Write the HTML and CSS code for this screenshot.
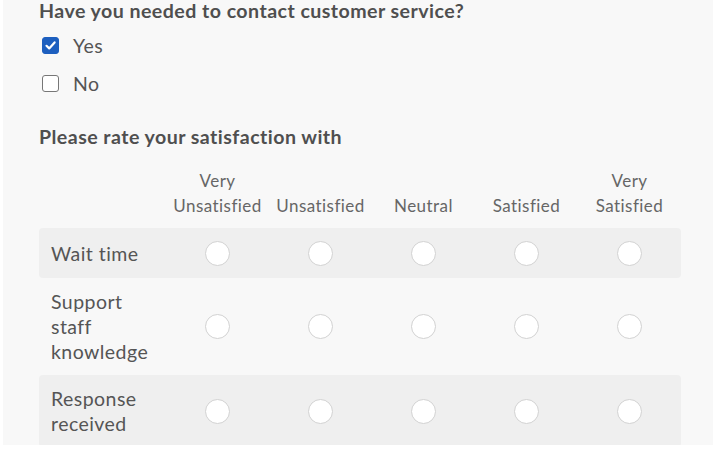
FILE: index.html
```html
<!DOCTYPE html>
<html>
<head>
   <title>Customer service survey</title>
   <link rel="stylesheet" href="styles.css">
</head>
<body>
   <div class="survey">
       <h2 class="question">Have you needed to contact customer service?</h2>
       <div class="options">
           <label class="option">
               <span class="box checked">
                   <svg width="13" height="13" viewBox="0 0 13 13"><path d="M2.5 6.8 L5.2 9.4 L10.6 3.4" fill="none" stroke="#fff" stroke-width="2.2" stroke-linecap="round" stroke-linejoin="round"/></svg>
               </span>
               Yes
           </label>
           <label class="option">
               <span class="box"></span>
               No
           </label>
       </div>

       <h2 class="question rate">Please rate your satisfaction with</h2>
       <table class="matrix">
           <thead>
               <tr>
                   <th class="label-col"></th>
                   <th>Very<br>Unsatisfied</th>
                   <th>Unsatisfied</th>
                   <th>Neutral</th>
                   <th>Satisfied</th>
                   <th>Very<br>Satisfied</th>
               </tr>
           </thead>
           <tbody>
               <tr class="shaded">
                   <td class="label-col">Wait time</td>
                   <td><input type="radio" name="wait"></td>
                   <td><input type="radio" name="wait"></td>
                   <td><input type="radio" name="wait"></td>
                   <td><input type="radio" name="wait"></td>
                   <td><input type="radio" name="wait"></td>
               </tr>
               <tr>
                   <td class="label-col">Support<br>staff<br>knowledge</td>
                   <td><input type="radio" name="staff"></td>
                   <td><input type="radio" name="staff"></td>
                   <td><input type="radio" name="staff"></td>
                   <td><input type="radio" name="staff"></td>
                   <td><input type="radio" name="staff"></td>
               </tr>
               <tr class="shaded">
                   <td class="label-col">Response<br>received</td>
                   <td><input type="radio" name="response"></td>
                   <td><input type="radio" name="response"></td>
                   <td><input type="radio" name="response"></td>
                   <td><input type="radio" name="response"></td>
                   <td><input type="radio" name="response"></td>
               </tr>
           </tbody>
       </table>
   </div>
</body>
</html>
```

FILE: styles.css
```css
body {
    margin: 0;
    background: #fff;
    font-family: Lato, "Open Sans", sans-serif;
    color: #555;
    letter-spacing: 0.45px;
}
.survey {
    margin: 0 7px 0 3px;
    padding: 0 0 0 36px;
    height: 445px;
    overflow: hidden;
    background-color: #f8f8f8;
}
.question {
    margin: 0;
    font-size: 19.6px;
    line-height: 22px;
    font-weight: 700;
    color: #4f4f4f;
}
.options {
    margin-top: 4px;
}
.option {
    display: flex;
    align-items: center;
    height: 38px;
    padding-left: 3px;
    font-size: 19.5px;
}
.box {
    display: flex;
    align-items: center;
    justify-content: center;
    box-sizing: border-box;
    width: 17px;
    height: 17px;
    margin-right: 14px;
    border: 1.5px solid #777;
    border-radius: 3px;
    background: #fff;
}
.box.checked {
    border-color: #1d5fbf;
    background: #1d5fbf;
}
.rate {
    margin-top: 24px;
}
.matrix {
    border-collapse: collapse;
    table-layout: fixed;
    width: 642px;
}
.matrix th {
    width: 103px;
    padding: 20px 0 10px;
    font-size: 17px;
    line-height: 25px;
    font-weight: 400;
    color: #666;
    vertical-align: bottom;
    text-align: center;
}
.matrix th.label-col {
    width: 127px;
}
.matrix td {
    padding: 11px 0;
    text-align: center;
    vertical-align: middle;
    font-size: 19.5px;
    line-height: 25px;
}
.matrix td.label-col {
    padding-left: 12px;
    text-align: left;
}
.shaded td {
    background-color: #efefef;
}
.shaded td:first-child {
    border-radius: 4px 0 0 4px;
}
.shaded td:last-child {
    border-radius: 0 4px 4px 0;
}
input[type="radio"] {
    appearance: none;
    display: block;
    margin: 0 auto;
    width: 25px;
    height: 25px;
    border: 1.5px solid #d2d2d2;
    border-radius: 50%;
    background: #fff;
    box-sizing: border-box;
}
.shaded input[type="radio"] {
    margin: 1.5px auto;
}
```
